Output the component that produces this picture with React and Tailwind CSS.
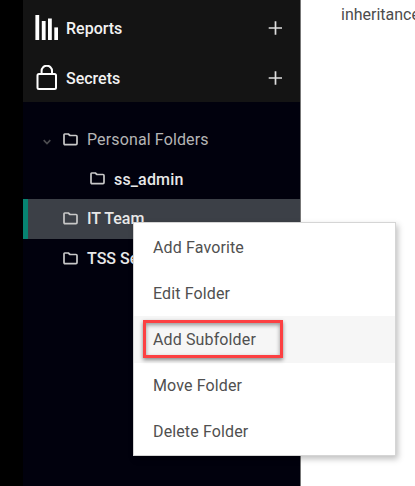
const FolderIcon = () => (
  <svg className="mb-px h-[13px] w-[15px] shrink-0 text-[#c8c8c8]" viewBox="0 0 15 13" fill="none" stroke="currentColor" strokeWidth="1.7" strokeLinejoin="round">
    <path d="M1.700 1h3.600l1.700 1.500h6q1 0 1 1v7.100q0 1-1 1H2q-1 0-1-1V1.700q0-.7.7-.7" />
  </svg>
);

const PlusIcon = () => (
  <svg className="h-[14px] w-[14px] shrink-0" viewBox="0 0 14 14" fill="none" stroke="#dedede" strokeWidth="1.700">
    <path d="M7.500 .3v13.400M.7 7h13.400" />
  </svg>
);

const ReportsIcon = () => (
  <svg className="h-[26px] w-6 shrink-0" viewBox="0 0 24 26" fill="#fff">
    <rect x=".4" y="0" width="3.800" height="25" />
    <rect x="6.800" y="6" width="3.800" height="19" />
    <rect x="13" y="3.500" width="3.800" height="21.500" />
    <rect x="19.300" y="12.400" width="3.700" height="12.600" />
  </svg>
);

const LockIcon = () => (
  <svg className="h-[26px] w-6 shrink-0" viewBox="0 0 24 26" fill="none" stroke="#fff" strokeWidth="2">
    <rect x="2.500" y="9" width="18.500" height="15" rx="1.500" />
    <path d="M6.600 9V5.900a5.200 5.200 0 0 1 10.400 0V9" />
  </svg>
);

function Section({ icon, label }) {
  return (
    <div className="flex h-[50px] shrink-0 items-center pr-[18px] pl-3">
      {icon}
      <span className="ml-[7px] grow pt-px text-base font-medium text-[#f2f2f2]">{label}</span>
      <PlusIcon />
    </div>
  );
}

function MenuItem({ label, active }) {
  return (
    <div className={`flex flex-1 items-center pl-[19px] ${active ? "bg-[#f6f6f6]" : ""}`}>
      <span className="relative pt-px">
        {label}
        {active && (
          <span className="absolute -top-[7px] -left-[10px] h-[38px] w-[140px] border-3 border-[#fc4042] shadow-[0_2px_4px_rgba(0,0,0,.45),inset_0_2px_4px_rgba(0,0,0,.4)]" />
        )}
      </span>
    </div>
  );
}

export default function App() {
  return (
    <div className="relative flex h-[486px] w-[415px] overflow-hidden bg-white font-['Roboto','Liberation_Sans',sans-serif]">
      <div className="w-[23px] shrink-0 bg-black" />
      <aside className="flex w-[278px] shrink-0 flex-col border-r border-[#777] bg-[#01010d]">
        <div className="h-[102px] shrink-0 bg-[#141414] pt-[3px]">
          <Section icon={<ReportsIcon />} label="Reports" />
          <Section icon={<LockIcon />} label="Secrets" />
        </div>
        <div className="flex flex-col pt-[18px] text-base text-[#e8e8e8]">
          <div className="flex h-[39px] items-center pl-5 text-[#b5b5b5]">
            <svg className="mt-1 mr-[12px] h-[6px] w-2" viewBox="0 0 8 6" fill="none" stroke="#4c4c50" strokeWidth="1.700">
              <path d="M.7 1.200 4 4.500l3.300-3.300" />
            </svg>
            <FolderIcon />
            <span className="ml-[9px] tracking-[0.008em]">Personal Folders</span>
          </div>
          <div className="flex h-10 items-center pl-[67px]">
            <FolderIcon />
            <span className="ml-[9px] pt-px font-medium tracking-[0.01em]">ss_admin</span>
          </div>
          <div className="flex h-10 items-center border-l-[5px] border-[#078371] bg-[#3c4047] pl-[35px]">
            <FolderIcon />
            <span className="ml-[9px] font-medium">IT Team</span>
          </div>
          <div className="flex h-10 items-center pl-10">
            <FolderIcon />
            <span className="ml-[9px] font-medium">TSS Secrets</span>
          </div>
        </div>
      </aside>
      <main className="pt-[5px] pl-10 text-base leading-5 whitespace-nowrap text-[#4c4c4c]">inheritance</main>

      <div className="absolute top-[222px] left-[133px] flex h-[234px] w-[263px] flex-col border border-[#d5d5d5] bg-white pt-px text-base tracking-[0.008em] text-[#505050] shadow-[2px_3px_6px_rgba(0,0,0,.25)]">
        <MenuItem label="Add Favorite" />
        <MenuItem label="Edit Folder" />
        <MenuItem label="Add Subfolder" active />
        <MenuItem label="Move Folder" />
        <MenuItem label="Delete Folder" />
      </div>
    </div>
  );
}
